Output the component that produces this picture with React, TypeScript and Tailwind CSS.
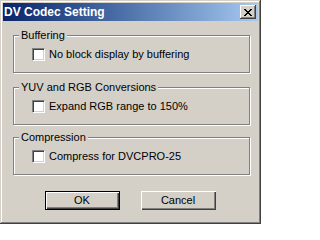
const ui = { fontFamily: '"Liberation Sans", Arial, sans-serif' };

function CloseGlyph() {
  // classic 8x7 pixel "x"
  const rows = ["11000011", "01100110", "00111100", "00011000", "00111100", "01100110", "11000011"];
  return (
    <svg width="8" height="7" viewBox="0 0 8 7" shapeRendering="crispEdges">
      {rows.flatMap((r, y) =>
        r.split("").map((c, x) => (c === "1" ? <rect key={`${x}-${y}`} x={x} y={y} width="1" height="1" fill="#000" /> : null))
      )}
    </svg>
  );
}

function CheckBox() {
  return (
    <div className="w-[13px] h-[13px] shrink-0 bg-white border border-t-[#808080] border-l-[#808080] border-b-white border-r-white shadow-[inset_1px_1px_#404040,inset_-1px_-1px_#d4d0c8]" />
  );
}

function Group({ title, label, className }: { title: string; label: string; className: string }) {
  return (
    <div
      className={`ml-[10px] w-[237px] h-[38px] flex flex-col border border-[#808080] shadow-[inset_1px_1px_#fff,1px_1px_#fff] ${className}`}
    >
      <span className="-mt-[7px] ml-[5px] w-fit px-[2px] bg-[#d4d0c8] text-[11px] leading-[13px] text-black">
        {title}
      </span>
      <div className="flex items-center gap-[4px] ml-[18px] mt-[6px]">
        <CheckBox />
        <span className="text-[11px] leading-[13px] text-black">{label}</span>
      </div>
    </div>
  );
}

export default function App() {
  return (
    <div
      style={ui}
      className="w-[261px] h-[224px] bg-[#d4d0c8] p-[3px] flex flex-col shadow-[inset_-1px_-1px_#404040,inset_1px_1px_#d4d0c8,inset_-2px_-2px_#808080,inset_2px_2px_#fff]"
    >
      <div className="h-[18px] shrink-0 flex items-center justify-between pl-[1px] pr-[2px] bg-linear-to-r from-[#0a246a] to-[#a6caf0]">
        <span className="text-[12px] font-bold text-white leading-[18px]">DV Codec Setting</span>
        <div className="w-[16px] h-[14px] flex items-center justify-center bg-[#d4d0c8] shadow-[inset_-1px_-1px_#404040,inset_1px_1px_#fff,inset_-2px_-2px_#808080]">
          <CloseGlyph />
        </div>
      </div>

      <Group className="mt-[14px]" title="Buffering" label="No block display by buffering" />
      <Group className="mt-[14px]" title="YUV and RGB Conversions" label="Expand RGB range to 150%" />
      <Group className="mt-[12px]" title="Compression" label="Compress for DVCPRO-25" />

      <div className="mt-[16px] flex justify-center gap-[21px] pr-[1px]">
        <div className="w-[75px] h-[19px] flex items-center justify-center border border-black bg-[#d4d0c8] shadow-[inset_1px_1px_#fff,inset_-1px_-1px_#404040,inset_-2px_-2px_#808080] text-[11px] text-black">
          OK
        </div>
        <div className="w-[75px] h-[19px] flex items-center justify-center bg-[#d4d0c8] shadow-[inset_1px_1px_#fff,inset_-1px_-1px_#404040,inset_-2px_-2px_#808080] text-[11px] text-black">
          Cancel
        </div>
      </div>
    </div>
  );
}
